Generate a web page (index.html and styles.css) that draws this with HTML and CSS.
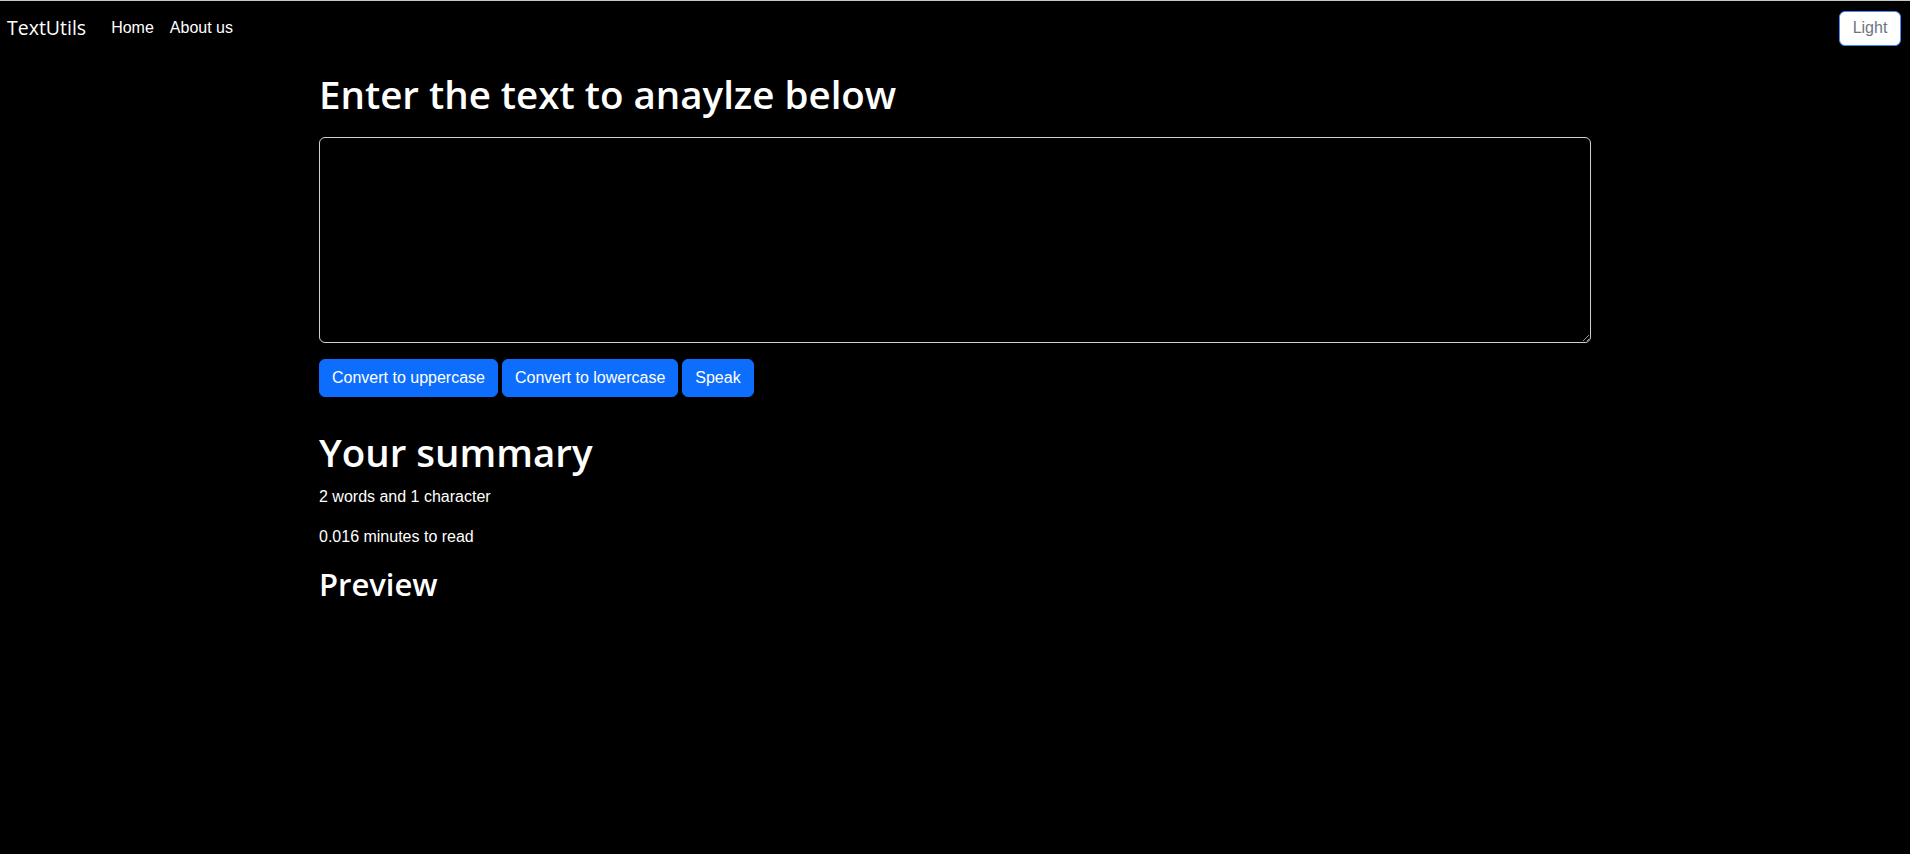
FILE: index.html
```html
<!DOCTYPE html>
<html lang="en">
<head>
<meta charset="utf-8">
<title>TextUtils</title>
<link rel="stylesheet" href="styles.css">
</head>
<body>
<nav class="navbar">
  <a class="brand" href="#">TextUtils</a>
  <ul class="nav">
    <li><a class="nav-link" href="#">Home</a></li>
    <li><a class="nav-link" href="#">About us</a></li>
  </ul>
  <button class="mode-btn">Light</button>
</nav>
<main class="container">
  <h1 class="title">Enter the text to anaylze below</h1>
  <textarea class="text-input" rows="8"></textarea>
  <div class="actions">
    <button class="btn">Convert to uppercase</button>
    <button class="btn">Convert to lowercase</button>
    <button class="btn">Speak</button>
  </div>
  <h1 class="summary-title">Your summary</h1>
  <p class="stat">2 words and 1 character</p>
  <p class="stat">0.016 minutes to read</p>
  <h2 class="preview-title">Preview</h2>
</main>
</body>
</html>
```

FILE: styles.css
```css
* { box-sizing: border-box; }
html, body {
  margin: 0;
  padding: 0;
  background: #000;
  color: #fff;
  font-family: "Liberation Sans", Arial, sans-serif;
  font-size: 16px;
  line-height: 24px;
}
body { min-height: 854px; }

.navbar {
  display: flex;
  align-items: center;
  height: 56px;
  padding: 8px 9px 8px 7px;
  box-shadow: inset 0 1px 0 #c8c8c8;
}
.brand {
  color: #fff;
  text-decoration: none;
  font-family: "Open Sans", "Liberation Sans", sans-serif;
  font-size: 19.5px;
  line-height: 30px;
  padding: 5px 0;
  margin-right: 17px;
}
.nav {
  display: flex;
  list-style: none;
  margin: 0;
  padding: 0;
  flex: 1;
}
.nav-link {
  display: block;
  color: #fff;
  text-decoration: none;
  padding: 8px 8px;
  font-size: 16px;
}
.mode-btn {
  width: 62px;
  height: 35px;
  background: #fff;
  color: #6c757d;
  border: 1px solid #3d8bfd;
  border-radius: 6px;
  font-family: inherit;
  font-size: 16px;
  padding: 0;
}

.container {
  width: 1272px;
  margin: 14px auto 0;
}
.title,
.summary-title,
.preview-title {
  font-family: "Open Sans", "Liberation Sans", sans-serif;
  font-weight: 600;
}
.title {
  margin: 0 0 19px;
  font-size: 38.5px;
  line-height: 48px;
}
.text-input {
  display: block;
  width: 100%;
  height: 206px;
  background: #000;
  color: #fff;
  border: 1px solid #d0d0d0;
  border-radius: 6px;
  padding: 6px 12px;
  font-family: inherit;
  font-size: 16px;
  resize: vertical;
}
.actions {
  display: flex;
  gap: 4px;
  margin-top: 16px;
}
.btn {
  height: 38px;
  background: #0d6efd;
  color: #fff;
  border: 1px solid #0d6efd;
  border-radius: 6px;
  padding: 6px 12px;
  font-family: inherit;
  font-size: 16px;
  line-height: 24px;
}
.summary-title {
  margin: 31px 0 9px;
  font-size: 38.5px;
  line-height: 48px;
}
.stat {
  margin: 0 0 16px;
}
.preview-title {
  margin: 0;
  font-size: 31px;
  line-height: 38px;
}
```
